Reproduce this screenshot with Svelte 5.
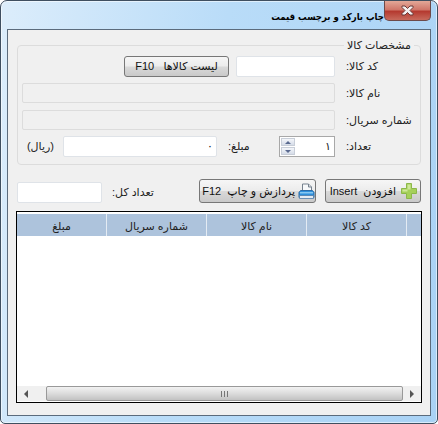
<script>
  const columns = [
    { title: 'کد کالا', width: 100 },
    { title: 'نام کالا', width: 100 },
    { title: 'شماره سریال', width: 100 },
    { title: 'مبلغ', width: 89 }
  ]
</script>

<div class="window" dir="rtl">
  <header class="titlebar">
    <button class="close" aria-label="بستن">
      <svg width="15" height="11" viewBox="0 0 15 11">
        <path d="M2 1h3l2.500 2.500L10 1h3v1.500L10 5.500l3 3V10h-3L7.500 7.500 5 10H2V8.500l3-3-3-3z" fill="#f4f0f0" stroke="#6b3a38" stroke-width="1"/>
      </svg>
    </button>
    <h1>چاپ بارکد و برچسب قیمت</h1>
  </header>

  <main class="client">
    <fieldset class="group">
      <legend>مشخصات کالا</legend>
      <div class="row r1">
        <label>کد کالا:</label>
        <div class="input code"></div>
        <button class="btn list">لیست کالاها&nbsp;&nbsp; F10</button>
      </div>
      <div class="row r2">
        <label>نام کالا:</label>
        <div class="input wide disabled"></div>
      </div>
      <div class="row r3">
        <label>شماره سریال:</label>
        <div class="input wide disabled"></div>
      </div>
      <div class="row r4">
        <label>تعداد:</label>
        <div class="spin">
          <span class="value">۱</span>
          <span class="arrows">
            <span class="arrow"><i class="up"></i></span>
            <span class="arrow"><i class="down"></i></span>
          </span>
        </div>
        <label class="amount-label">مبلغ:</label>
        <div class="input amount">۰</div>
        <span class="unit">(ریال)</span>
      </div>
    </fieldset>

    <div class="actions">
      <div class="action-buttons">
        <button class="btn add">
          <svg width="18" height="18" viewBox="0 0 18 18">
            <path d="M6.500 1.500h5v5h5v5h-5v5h-5v-5h-5v-5h5z" fill="#a5d05a" stroke="#8cb84a"/>
            <path d="M7.500 2.500h3v5h-3zM2.500 7.500h5v2h-5z" fill="#cfe89a"/>
          </svg>
          افزودن&nbsp; Insert
        </button>
        <button class="btn print">
          <svg width="17" height="17" viewBox="0 0 17 17">
            <path d="M4.500 1h6l3 3v6h-9z" fill="#f6f8fa" stroke="#75818e"/>
            <path d="M10.500 1v3h3" fill="#d5dbe2" stroke="#75818e"/>
            <path d="M2.500 7.500h12l1.500 2v5H1v-5z" fill="#2f90dc" stroke="#2a6ca8"/>
            <path d="M2 9h13v1.500H2z" fill="#86c8f2"/>
            <path d="M1.500 12.500h14v3h-14z" fill="#e4ebf2" stroke="#4e7ba8" stroke-width=".8"/>
          </svg>
          پردازش و چاپ&nbsp; F12
        </button>
      </div>
      <div class="total">
        <label>تعداد کل:</label>
        <div class="input total-input"></div>
      </div>
    </div>

    <section class="grid">
      <div class="head">
        <span class="cell stub"></span>
        {#each columns as col}
          <span class="cell" style="width: {col.width}px">{col.title}</span>
        {/each}
      </div>
      <div class="rows"></div>
      <div class="hscroll" dir="ltr">
        <span class="sb-btn first"><i class="left"></i></span>
        <span class="thumb"><span class="grip"></span></span>
        <span class="sb-btn last"><i class="right"></i></span>
      </div>
    </section>
  </main>
</div>

<style>
  :global(body) {
    margin: 0;
    background: #fff;
  }

  .window {
    box-sizing: border-box;
    width: 438px;
    height: 424px;
    display: flex;
    flex-direction: column;
    border: 1px solid #3f4f60;
    border-radius: 7px 7px 5px 5px;
    background: linear-gradient(100deg, #dcedfb 0%, #b9dcf8 45%, #a9d2f5 100%);
    box-shadow: inset 0 0 0 1px rgba(255, 255, 255, 0.55);
    font: 11px "Liberation Sans", "DejaVu Sans", sans-serif;
    color: #222;
    overflow: hidden;
  }

  .titlebar {
    flex: none;
    height: 28px;
    display: flex;
    align-items: flex-start;
    padding-right: 6px;
  }

  .titlebar h1 {
    margin: 7px 0 0;
    font: bold 9.5px "DejaVu Sans Condensed", "DejaVu Sans", sans-serif;
    color: #000;
    line-height: 18px;
    white-space: nowrap;
  }

  .close {
    width: 47px;
    height: 20px;
    padding: 0;
    border: 1px solid #6d4a4a;
    border-top: 0;
    border-radius: 0 0 5px 5px;
    background: linear-gradient(#e3a898 0%, #d0776a 45%, #b53a30 55%, #c76a5c 100%);
    display: flex;
    align-items: center;
    justify-content: center;
  }

  .client {
    flex: 1;
    box-sizing: border-box;
    margin: 0 6px 7px;
    padding: 9px 9px 12px;
    display: flex;
    flex-direction: column;
    background: #f0f0f0;
    border: 1px solid #5b6b7c;
    min-height: 0;
  }

  .group {
    box-sizing: border-box;
    flex: none;
    height: 126px;
    margin: 0;
    padding: 0;
    border: 1px solid #dcdcdc;
    border-radius: 4px;
  }

  .group legend {
    margin-right: 6px;
    padding: 0 3px;
    height: 13px;
    line-height: 13px;
    color: #222;
  }

  .row {
    display: flex;
    align-items: center;
  }

  .r1 { margin-top: 4px; height: 21px; }
  .r2 { margin-top: 6px; height: 20px; }
  .r3 { margin-top: 7px; height: 20px; }
  .r4 { margin-top: 6px; height: 21px; }

  .row > label:first-child {
    box-sizing: border-box;
    width: 85px;
    padding-left: 11px;
    text-align: left;
    white-space: nowrap;
  }

  .input {
    box-sizing: border-box;
    height: 100%;
    background: #fff;
    border: 1px solid #dfe3e8;
    border-radius: 2px;
  }

  .code { width: 99px; }
  .wide { width: 313px; }

  .disabled {
    background: #f0f0f0;
    border-color: #dcdcdc;
  }

  .btn {
    box-sizing: border-box;
    padding: 0;
    border: 1px solid #777;
    border-radius: 3px;
    background: linear-gradient(#f6f6f6 0%, #ececec 48%, #d9d9d9 52%, #c9c9c9 100%);
    font: inherit;
    color: #111;
    display: flex;
    align-items: center;
    white-space: nowrap;
  }

  .list {
    width: 105px;
    height: 21px;
    margin-right: 7px;
    justify-content: center;
  }

  .spin {
    box-sizing: border-box;
    width: 56px;
    height: 100%;
    display: flex;
    justify-content: space-between;
    background: #fff;
    border: 1px solid #a8a8a8;
  }

  .value {
    padding-right: 3px;
    line-height: 18px;
  }

  .arrows {
    box-sizing: border-box;
    width: 16px;
    display: flex;
    flex-direction: column;
    gap: 1px;
    padding: 1px;
  }

  .arrow {
    flex: 1;
    background: linear-gradient(#f4f6fa, #d5dce8);
    border: 1px solid #c8ced8;
    display: flex;
    align-items: center;
    justify-content: center;
  }

  .arrow i {
    width: 0;
    height: 0;
    border-left: 3px solid transparent;
    border-right: 3px solid transparent;
  }

  .up { border-bottom: 3px solid #5a6a90; }
  .down { border-top: 3px solid #5a6a90; }

  .amount-label {
    box-sizing: border-box;
    width: 62px;
    padding-left: 11px;
    text-align: left;
  }

  .amount {
    width: 154px;
    padding-right: 3px;
    line-height: 19px;
  }

  .unit {
    margin-right: 9px;
  }

  .actions {
    flex: none;
    margin-top: 14px;
    height: 24px;
    display: flex;
    justify-content: space-between;
  }

  .action-buttons {
    display: flex;
    gap: 9px;
  }

  .add {
    width: 96px;
    gap: 4px;
    padding-right: 2px;
  }

  .print {
    width: 117px;
    gap: 3px;
  }

  .total {
    display: flex;
    align-items: center;
    gap: 10px;
    padding-top: 3px;
  }

  .total-input {
    width: 85px;
    height: 21px;
  }

  .grid {
    flex: 1;
    min-height: 0;
    margin: 8px -1px 0;
    display: flex;
    flex-direction: column;
    background: #fff;
    border: 1px solid #000;
    padding: 2px 0 1px;
  }

  .head {
    flex: none;
    height: 22px;
    display: flex;
    background: #adc3dc;
  }

  .cell {
    box-sizing: border-box;
    border-left: 1px solid #e4ebf3;
    text-align: center;
    line-height: 24px;
    color: #222;
    white-space: nowrap;
  }

  .stub { width: 15px; }
  .cell:last-child { border-left: 0; }

  .rows { flex: 1; }

  .hscroll {
    flex: none;
    height: 15px;
    display: flex;
    background: #f0f0f0;
  }

  .sb-btn {
    flex: none;
    display: flex;
    align-items: center;
    background: #f0f0f0;
  }

  .first {
    width: 29px;
    padding-left: 7px;
    box-sizing: border-box;
  }

  .last {
    width: 18px;
    justify-content: center;
  }

  .sb-btn i {
    width: 0;
    height: 0;
    border-top: 4px solid transparent;
    border-bottom: 4px solid transparent;
  }

  .sb-btn .left { border-right: 4px solid #555; }
  .sb-btn .right { border-left: 4px solid #555; }

  .thumb {
    flex: 1;
    box-sizing: border-box;
    border: 1px solid #999;
    border-radius: 2px;
    background: linear-gradient(#f2f2f2, #dcdcdc 50%, #c2c2c2);
    display: flex;
    align-items: center;
    justify-content: center;
  }

  .grip {
    width: 7px;
    height: 6px;
    background: repeating-linear-gradient(90deg, #777 0 1px, transparent 1px 3px);
  }
</style>
